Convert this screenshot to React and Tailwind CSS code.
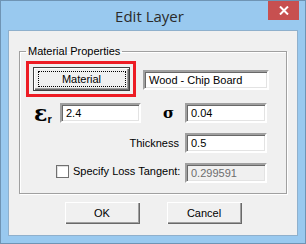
import React from 'react';

const ui = { fontFamily: '"Liberation Sans", Arial, sans-serif' };

// sunken edit box in the classic Windows look
const Field = ({ value, width, disabled }) => (
  <div
    className={`h-[20px] flex items-center pl-[4px] text-[11px] leading-none border-2 border-t-[#a0a0a0] border-l-[#a0a0a0] border-r-[#ffffff] border-b-[#ffffff] shadow-[inset_1px_1px_0_#696969,inset_-1px_-1px_0_#e3e3e3] ${
      disabled ? 'bg-[#f0f0f0] text-[#6d6d6d]' : 'bg-white text-black'
    } ${width}`}
  >
    {value}
  </div>
);

const Button = ({ children, className = '', focused }) => (
  <div
    className={`flex items-center justify-center bg-[#f0f0f0] text-[11px] text-black ${
      focused
        ? 'border border-[#404040] shadow-[inset_1px_1px_0_#fff,inset_-1px_-1px_0_#696969,inset_-2px_-2px_0_#a0a0a0]'
        : 'shadow-[inset_1px_1px_0_#fff,inset_-1px_-1px_0_#696969,inset_-2px_-2px_0_#a0a0a0]'
    } ${className}`}
  >
    {focused ? (
      <div className="w-[88px] h-[16px] border border-dotted border-black flex items-center justify-center">
        {children}
      </div>
    ) : (
      children
    )}
  </div>
);

export default function App() {
  return (
    <div
      className="w-[306px] h-[244px] bg-[#99c9ef] border border-[#6f94b4] flex flex-col overflow-hidden"
      style={ui}
    >
      {/* Title bar */}
      <div className="h-[29px] flex items-start shrink-0">
        <div className="flex-1 h-full flex items-center justify-center pl-[30px]">
          <span
            className="text-[15px] text-[#2b2b2b] mt-[2px]"
            style={{ fontFamily: '"Open Sans", "Noto Sans", sans-serif' }}
          >
            Edit Layer
          </span>
        </div>
        <div className="w-[31px] h-[20px] mt-[-1px] mr-[6px] bg-[#c75050] flex items-center justify-center">
          <svg width="10" height="9" viewBox="0 0 10 9">
            <path d="M1 0.5 L9 8.5 M9 0.5 L1 8.5" stroke="#fff" strokeWidth="2" />
          </svg>
        </div>
      </div>

      {/* Client area */}
      <div className="ml-[7px] w-[290px] h-[206px] bg-[#f0f0f0] border border-[#8fb0cc] flex flex-col shrink-0">
        <fieldset className="ml-[10px] mt-[14px] w-[268px] h-[149px] border border-[#a0a0a0] shadow-[1px_1px_0_#fff,inset_1px_1px_0_#fff] pl-[6px] pr-0 pb-0 pt-0 m-0">
          <legend className="px-[2px] text-[11px] leading-[13px] text-black">
            Material Properties
          </legend>

          <div className="flex flex-col mt-[3px]">
            {/* Row 1 */}
            <div className="flex items-center">
              <div className="w-[110px] h-[36px] border-[3px] border-[#ed1c24] pl-[4px] pt-[3px]">
                <Button focused className="w-[97px] h-[24px]">
                  Material
                </Button>
              </div>
              <div className="ml-[7px] mt-[2px]">
                <Field value="Wood - Chip Board" width="w-[126px]" />
              </div>
            </div>

            {/* Row 2 */}
            <div className="flex items-center mt-[6px]">
              <div className="w-[34px] h-[20px] flex items-end pl-[8px] text-black">
                <span
                  className="text-[22px] leading-[20px] font-bold"
                  style={{ fontFamily: '"DejaVu Serif", "Liberation Serif", serif' }}
                >
                  ε
                </span>
                <span className="text-[11px] font-bold leading-none mb-[-2px]">r</span>
              </div>
              <Field value="2.4" width="w-[81px]" />
              <div className="w-[44px] flex justify-end pr-[11px]">
                <span
                  className="text-[15px] font-bold leading-none text-black"
                  style={{ fontFamily: '"DejaVu Serif", "Liberation Serif", serif' }}
                >
                  σ
                </span>
              </div>
              <Field value="0.04" width="w-[82px]" />
            </div>

            {/* Row 3 */}
            <div className="flex items-center mt-[10px]">
              <div className="w-[159px] flex justify-end pr-[6px] text-[11px] text-black">
                Thickness
              </div>
              <Field value="0.5" width="w-[82px]" />
            </div>

            {/* Row 4 */}
            <div className="flex items-center mt-[10px]">
              <div className="w-[159px] flex items-center pl-[30px] mt-[-4px]">
                <div className="w-[13px] h-[13px] bg-white border border-[#707070] shadow-[inset_1px_1px_0_#e0e0e0]" />
                <span className="ml-[4px] text-[11px] text-black">Specify Loss Tangent:</span>
              </div>
              <Field value="0.299591" width="w-[82px]" disabled />
            </div>
          </div>
        </fieldset>

        {/* Bottom buttons */}
        <div className="flex justify-center gap-[27px] mt-[8px]">
          <Button className="w-[75px] h-[22px]">OK</Button>
          <Button className="w-[75px] h-[22px]">Cancel</Button>
        </div>
      </div>
    </div>
  );
}
